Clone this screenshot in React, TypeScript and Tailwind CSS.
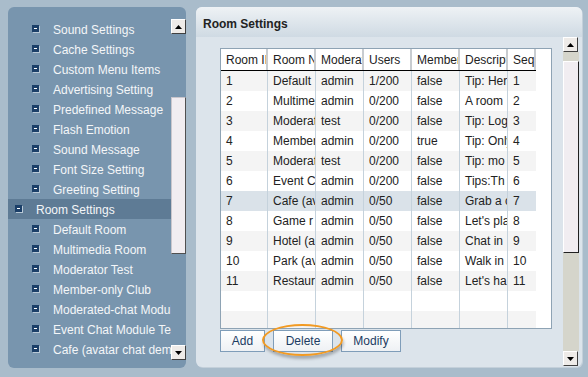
import React from "react";

const font = { fontFamily: '"Liberation Sans", Arial, sans-serif' };

const subItems1 = [
  "Sound Settings",
  "Cache Settings",
  "Custom Menu Items",
  "Advertising Setting",
  "Predefined Message",
  "Flash Emotion",
  "Sound Message",
  "Font Size Setting",
  "Greeting Setting",
];
const subItems2 = [
  "Default Room",
  "Multimedia Room",
  "Moderator Test",
  "Member-only Club",
  "Moderated-chat Module",
  "Event Chat Module Test",
  "Cafe (avatar chat demo)",
];

const rows = [
  ["1", "Default", "admin", "1/200", "false", "Tip: Here", "1"],
  ["2", "Multimedia", "admin", "0/200", "false", "A room", "2"],
  ["3", "Moderated", "test", "0/200", "false", "Tip: Log", "3"],
  ["4", "Member", "admin", "0/200", "true", "Tip: Only", "4"],
  ["5", "Moderated", "test", "0/200", "false", "Tip: mo", "5"],
  ["6", "Event C", "admin", "0/200", "false", "Tips:Th", "6"],
  ["7", "Cafe (av", "admin", "0/50", "false", "Grab a c", "7"],
  ["8", "Game r", "admin", "0/50", "false", "Let's play", "8"],
  ["9", "Hotel (a", "admin", "0/50", "false", "Chat in", "9"],
  ["10", "Park (av", "admin", "0/50", "false", "Walk in", "10"],
  ["11", "Restaurant", "admin", "0/50", "false", "Let's ha", "11"],
];
const headers = ["Room ID", "Room Name", "Moderator", "Users", "Member", "Description", "Seq"];
const widths = ["w-[47px]", "w-[48px]", "w-[48px]", "w-[48px]", "w-[48px]", "w-[48px]", "w-[28px]"];

function MinusIcon() {
  return (
    <span className="relative block w-[8px] h-[8px] shrink-0">
      <span className="absolute left-0 top-0 w-[7px] h-[7px] bg-[#1b3f68] shadow-[1px_1px_0_#b9c9d6]" />
      <span className="absolute left-[2px] top-[3px] w-[3px] h-[1px] bg-white" />
    </span>
  );
}

function Arrow({ up }: { up: boolean }) {
  return (
    <svg width="7" height="4" viewBox="0 0 7 4">
      {up ? <polygon points="0,4 7,4 3.5,0" fill="#000" /> : <polygon points="0,0 7,0 3.5,4" fill="#000" />}
    </svg>
  );
}

function ScrollBtn({ up }: { up: boolean }) {
  return (
    <div className="w-[15px] h-[15px] bg-[#eeebe8] border-t border-l border-white border-r border-b border-r-[#404040] border-b-[#404040] flex items-center justify-center">
      <Arrow up={up} />
    </div>
  );
}

function Item({ text, top }: { text: string; top?: boolean }) {
  return (
    <div
      className={`h-[20px] flex items-center gap-[13px] whitespace-nowrap ${
        top ? "pl-[7px] bg-[#5e7b95]" : "pl-[24px]"
      }`}
    >
      <MinusIcon />
      <span className="relative top-[1px]">{text}</span>
    </div>
  );
}

export default function App() {
  return (
    <div className="w-[588px] h-[377px] bg-[#a9bccb] overflow-hidden flex pt-[7px] pl-[8px]" style={font}>
      {/* Left panel */}
      <div className="w-[178px] h-[361px] bg-[#7895ae] rounded-[6px] flex pt-[12px] overflow-hidden">
        <div className="w-[163px] h-[340px] overflow-hidden text-[12px] text-[#f4f6f8]">
          {subItems1.map((t) => (
            <Item key={t} text={t} />
          ))}
          <Item text="Room Settings" top />
          {subItems2.map((t) => (
            <Item key={t} text={t} />
          ))}
        </div>
        <div className="w-[15px] h-[341px] flex flex-col">
          <ScrollBtn up />
          <div className="h-[63px]" />
          <div className="h-[157px] bg-[#f1edf1] border border-[#c9c6cc] border-r-[#505050] border-b-[#505050]" />
          <div className="flex-1" />
          <ScrollBtn up={false} />
        </div>
      </div>

      {/* Right panel */}
      <div className="ml-[10px] w-[386px] h-[360px] rounded-[6px] bg-[#dce4eb] overflow-hidden flex flex-col shadow-[1px_1px_0_#c4d0da]">
        <div className="h-[30px] bg-gradient-to-b from-[#eef2f5] to-[#cfdae3] flex items-center pl-[7px] pt-[4px] text-[12px] font-bold text-[#222]">
          Room Settings
        </div>
        <div className="flex pt-[11px]">
          <div className="ml-[24px] flex flex-col">
            {/* Table */}
            <div className="w-[332px] h-[281px] border border-[#8ea3b4] bg-white overflow-hidden">
              <div className="flex h-[21px] text-[12px] text-[#222]">
                {headers.map((h, i) => (
                  <div
                    key={h}
                    className={`${widths[i]} h-full pl-[5px] flex items-center overflow-hidden whitespace-nowrap border-r-2 border-r-[#c8ccd0] ${i === 6 ? "border-r-0" : ""}`}
                  >
                    {h}
                  </div>
                ))}
              </div>
              <div className="w-[315px] h-[1px] bg-black" />
              {[...rows, null, null].map((r, ri) => {
                const bg = ri === 6 ? "bg-[#dae2e9]" : ri % 2 === 0 ? "bg-[#f4f4f4]" : "bg-white";
                return (
                  <div key={ri} className={`flex h-[20px] w-[315px] text-[12px] text-[#222] ${bg}`}>
                    {widths.map((w, ci) => (
                      <div
                        key={ci}
                        className={`${w} h-full pl-[5px] flex items-center overflow-hidden whitespace-nowrap ${ci < 6 ? "border-r border-r-[#c5d2dc]" : ""}`}
                      >
                        {r ? r[ci] : ""}
                      </div>
                    ))}
                  </div>
                );
              })}
            </div>
            {/* Buttons */}
            <div className="relative flex gap-[8px] mt-[1px] text-[12px] text-[#1b3b62]">
              <div className="w-[45px] h-[22px] border border-[#7f9db9] bg-gradient-to-b from-white to-[#eef1f4] flex items-center justify-center">Add</div>
              <div className="w-[60px] h-[22px] border border-[#7f9db9] bg-gradient-to-b from-white to-[#eef1f4] flex items-center justify-center">Delete</div>
              <div className="w-[60px] h-[22px] border border-[#7f9db9] bg-gradient-to-b from-white to-[#eef1f4] flex items-center justify-center">Modify</div>
              <div className="absolute left-[42px] top-[-6px] w-[81px] h-[32px] rounded-[50%] border-2 border-[#f29a22] shadow-[1px_3px_3px_rgba(0,0,0,0.25)]" />
            </div>
          </div>
          {/* Right scrollbar */}
          <div className="ml-[11px] w-[16px] h-[329px] flex flex-col -mt-[11px]">
            <ScrollBtn up />
            <div className="w-[16px] h-[9px] bg-[#d5d5cb]" />
            <div className="w-[16px] h-[192px] bg-[#f1edf1] border border-white border-r-[#202020] border-b-[#202020]" />
            <div className="w-[16px] flex-1 bg-[#d5d5cb]" />
            <ScrollBtn up={false} />
          </div>
        </div>
      </div>
    </div>
  );
}
